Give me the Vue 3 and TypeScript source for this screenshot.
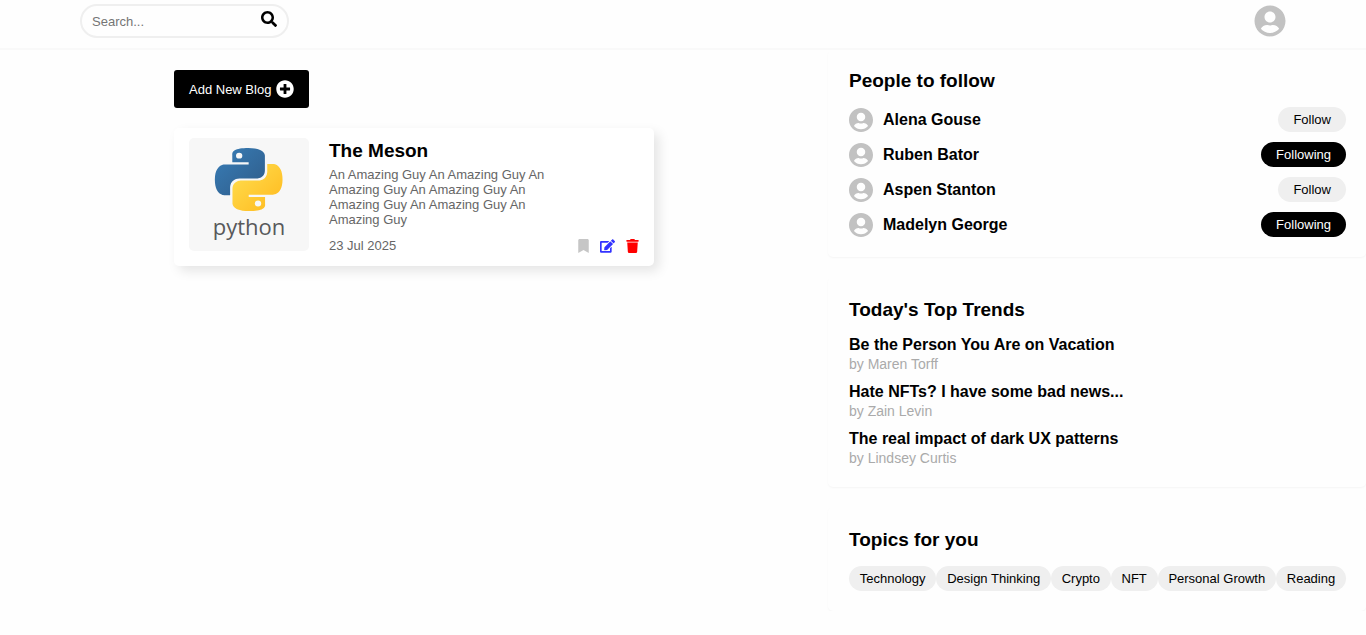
<script setup lang="ts">
import { ref } from 'vue'

interface Person { name: string; following: boolean }
interface Trend { title: string; author: string }

const search = ref('')
const people = ref<Person[]>([
  { name: 'Alena Gouse', following: false },
  { name: 'Ruben Bator', following: true },
  { name: 'Aspen Stanton', following: false },
  { name: 'Madelyn George', following: true },
])
const trends: Trend[] = [
  { title: 'Be the Person You Are on Vacation', author: 'Maren Torff' },
  { title: 'Hate NFTs? I have some bad news...', author: 'Zain Levin' },
  { title: 'The real impact of dark UX patterns', author: 'Lindsey Curtis' },
]
const topics: string[] = ['Technology', 'Design Thinking', 'Crypto', 'NFT', 'Personal Growth', 'Reading']

const userIcon =
  'M248 8C111 8 0 119 0 256s111 248 248 248 248-111 248-248S385 8 248 8zm0 96c48.6 0 88 39.4 88 88s-39.4 88-88 88-88-39.4-88-88 39.4-88 88-88zm0 344c-58.7 0-111.3-26.6-146.5-68.2 18.8-35.4 55.6-59.8 98.5-59.8 2.4 0 4.8.4 7.1 1.1 13 4.2 26.6 6.9 40.9 6.9 14.3 0 28-2.7 40.9-6.9 2.3-.7 4.7-1.1 7.1-1.1 42.9 0 79.7 24.4 98.5 59.8C359.3 421.4 306.7 448 248 448z'
</script>

<template>
  <div class="page">
    <header class="topbar">
      <form class="search" role="search" @submit.prevent>
        <input v-model="search" type="text" placeholder="Search..." aria-label="Search" />
        <button class="icon-button" type="submit" aria-label="Search">
          <svg width="16" height="16" viewBox="0 0 512 512"><path d="M505 442.7L405.3 343c-4.500-4.500-10.600-7-17-7H372c27.600-35.300 44-79.700 44-128C416 93.100 322.900 0 208 0S0 93.100 0 208s93.100 208 208 208c48.300 0 92.700-16.400 128-44v16.300c0 6.400 2.500 12.500 7 17l99.700 99.700c9.400 9.400 24.600 9.400 33.900 0l28.300-28.300c9.400-9.400 9.400-24.600.1-34zM208 336c-70.700 0-128-57.200-128-128 0-70.700 57.200-128 128-128 70.700 0 128 57.200 128 128 0 70.700-57.200 128-128 128z" /></svg>
        </button>
      </form>
      <button class="icon-button profile" type="button" aria-label="Profile">
        <svg width="32" height="32" viewBox="-8 0 512 512"><path :d="userIcon" /></svg>
      </button>
    </header>

    <div class="content">
      <main class="feed">
        <button class="add" type="button">
          Add New Blog
          <svg width="18" height="18" viewBox="0 0 512 512"><path d="M256 8C119 8 8 119 8 256s111 248 248 248 248-111 248-248S393 8 256 8zm144 276c0 6.600-5.400 12-12 12h-92v92c0 6.600-5.400 12-12 12h-56c-6.600 0-12-5.400-12-12v-92h-92c-6.600 0-12-5.400-12-12v-56c0-6.600 5.400-12 12-12h92v-92c0-6.600 5.400-12 12-12h56c6.600 0 12 5.400 12 12v92h92c6.600 0 12 5.400 12 12v56z" /></svg>
        </button>

        <article class="blog">
          <svg class="thumb" width="120" height="113" viewBox="0 0 120 113" role="img" aria-label="python">
            <defs>
              <linearGradient id="py-blue" x1="0" y1="0" x2="1" y2="1"><stop offset="0" stop-color="#387eb8" /><stop offset="1" stop-color="#2f5b88" /></linearGradient>
              <linearGradient id="py-yellow" x1="0" y1="0" x2="1" y2="1"><stop offset="0" stop-color="#ffe052" /><stop offset="1" stop-color="#ffb81c" /></linearGradient>
            </defs>
            <rect width="120" height="113" fill="#f7f7f7" />
            <g transform="translate(26 10) scale(2.8 2.63)">
              <path fill="url(#py-blue)" d="M14.25.18l.9.2.73.26.59.3.45.32.34.34.25.34.16.33.1.3.04.26.02.2-.01.13V8.5l-.05.63-.13.55-.21.46-.26.38-.3.31-.33.25-.35.19-.35.14-.33.1-.3.07-.26.04-.21.02H8.77l-.69.05-.59.14-.5.22-.41.27-.33.32-.27.35-.2.36-.15.37-.1.35-.07.32-.04.27-.02.21v3.060H3.170l-.21-.03-.28-.07-.32-.12-.35-.18-.36-.26-.36-.36-.35-.46-.32-.59-.28-.73-.21-.88-.14-1.050-.05-1.230.06-1.220.16-1.040.24-.87.32-.71.36-.57.4-.44.42-.33.42-.24.4-.16.36-.1.32-.05.24-.01h.16l.06.01h8.160v-.83H6.180l-.01-2.750-.02-.37.05-.34.11-.31.17-.28.25-.26.31-.23.38-.2.44-.18.51-.15.58-.12.64-.1.71-.06.77-.04.84-.02 1.270.05z" />
              <circle cx="8.630" cy="2.900" r="1.130" fill="#f7f7f7" />
              <path fill="url(#py-yellow)" d="M21.1 6.110l.28.06.32.12.35.18.36.27.36.35.35.47.32.59.28.73.21.88.14 1.040.05 1.230-.06 1.230-.16 1.040-.24.86-.32.71-.36.57-.4.45-.42.33-.42.24-.4.16-.36.09-.32.05-.24.02-.16-.01h-8.220v.82h5.840l.01 2.760.02.36-.05.34-.11.31-.17.29-.25.25-.31.24-.38.2-.44.17-.51.15-.58.13-.64.09-.71.07-.77.04-.84.01-1.270-.04-1.070-.14-.9-.2-.73-.25-.59-.3-.45-.33-.34-.34-.25-.34-.16-.33-.1-.3-.04-.25-.02-.2.01-.13v-5.340l.05-.64.13-.54.21-.46.26-.38.3-.32.33-.24.35-.2.35-.14.33-.1.3-.06.26-.04.21-.02.13-.01h5.840l.69-.05.59-.14.5-.21.41-.28.33-.32.27-.35.2-.36.15-.36.1-.35.07-.32.04-.28.02-.21V6.070h2.090l.14.01z" />
              <circle cx="15.370" cy="21.100" r="1.130" fill="#f7f7f7" />
            </g>
            <text x="60" y="97" text-anchor="middle" class="wordmark">python</text>
          </svg>
          <div class="blog-body">
            <h2>The Meson</h2>
            <p>An Amazing Guy An Amazing Guy An Amazing Guy An Amazing Guy An Amazing Guy An Amazing Guy An Amazing Guy</p>
            <footer>
              <time datetime="2025-07-23">23 Jul 2025</time>
              <div class="actions">
                <button class="icon-button save" type="button" aria-label="Bookmark">
                  <svg width="11" height="14" viewBox="0 0 384 512"><path d="M0 512V48C0 21.490 21.490 0 48 0h288c26.510 0 48 21.490 48 48v464L192 400 0 512z" /></svg>
                </button>
                <button class="icon-button edit" type="button" aria-label="Edit">
                  <svg width="15" height="14" viewBox="0 0 576 512"><path d="M402.600 83.200l90.200 90.200c3.800 3.800 3.800 10 0 13.800L274.400 405.600l-92.800 10.300c-12.400 1.400-22.900-9.100-21.500-21.500l10.300-92.800L388.800 83.200c3.800-3.800 10-3.800 13.800 0zm162-22.900l-48.800-48.800c-15.200-15.200-39.900-15.200-55.200 0l-35.400 35.400c-3.800 3.800-3.800 10 0 13.800l90.200 90.200c3.800 3.800 10 3.800 13.800 0l35.400-35.400c15.200-15.300 15.200-40 0-55.200zM384 346.200V448H64V128h229.800c3.200 0 6.200-1.300 8.500-3.500l40-40c7.600-7.600 2.200-20.500-8.500-20.500H48C21.500 64 0 85.500 0 112v352c0 26.500 21.500 48 48 48h352c26.500 0 48-21.500 48-48V306.200c0-10.700-12.900-16-20.500-8.500l-40 40c-2.200 2.300-3.500 5.300-3.500 8.500z" /></svg>
                </button>
                <button class="icon-button delete" type="button" aria-label="Delete">
                  <svg width="13" height="14" viewBox="0 0 448 512"><path d="M432 32H312l-9.400-18.700A24 24 0 0 0 281.100 0H166.800a23.720 23.720 0 0 0-21.400 13.300L136 32H16A16 16 0 0 0 0 48v32a16 16 0 0 0 16 16h416a16 16 0 0 0 16-16V48a16 16 0 0 0-16-16zM53.200 467a48 48 0 0 0 47.900 45h245.800a48 48 0 0 0 47.900-45L416 128H32z" /></svg>
                </button>
              </div>
            </footer>
          </div>
        </article>
      </main>

      <aside class="sidebar">
        <section class="panel">
          <h2>People to follow</h2>
          <ul class="people">
            <li v-for="person in people" :key="person.name">
              <svg class="avatar" width="24" height="24" viewBox="0 8 496 496" aria-hidden="true"><path :d="userIcon" /></svg>
              <h3>{{ person.name }}</h3>
              <button
                class="follow"
                :class="{ active: person.following }"
                type="button"
                @click="person.following = !person.following"
              >{{ person.following ? 'Following' : 'Follow' }}</button>
            </li>
          </ul>
        </section>

        <section class="panel">
          <h2>Today's Top Trends</h2>
          <ul class="trends">
            <li v-for="trend in trends" :key="trend.title">
              <h3>{{ trend.title }}</h3>
              <p>by {{ trend.author }}</p>
            </li>
          </ul>
        </section>

        <section class="panel">
          <h2>Topics for you</h2>
          <div class="topics">
            <button v-for="topic in topics" :key="topic" type="button">{{ topic }}</button>
          </div>
        </section>
      </aside>
    </div>
  </div>
</template>

<style>
body {
  margin: 0;
  background: #fefefe;
}
</style>

<style scoped>
.page,
button,
input {
  font-family: "Liberation Sans", Arial, sans-serif;
}
h2, h3, p, ul {
  margin: 0;
  padding: 0;
}
ul {
  list-style: none;
}
svg {
  display: block;
  fill: currentColor;
}
button {
  border: 0;
  cursor: pointer;
  font-size: 13px;
}
.icon-button {
  padding: 0;
  background: none;
  color: #000;
}
.topbar {
  display: flex;
  align-items: flex-start;
  justify-content: space-between;
  height: 44px;
  padding: 4px 80px 0;
  border-bottom: 2px solid #f9f9f9;
}
.search {
  display: flex;
  align-items: flex-start;
  box-sizing: border-box;
  width: 209px;
  height: 34px;
  padding: 0 10px;
  border: 2px solid #efefef;
  border-radius: 17px;
}
.search input {
  flex: 1;
  min-width: 0;
  height: 30px;
  padding: 0;
  border: 0;
  outline: 0;
  background: none;
  font-size: 13px;
}
.search input::placeholder {
  color: #757575;
}
.search .icon-button {
  padding-top: 5px;
}
.profile,
.avatar {
  color: #c2c2c2;
}
.profile {
  padding-top: 1px;
}
.content {
  display: grid;
  grid-template-columns: minmax(0, 1fr) minmax(538px, 39%);
}
.feed {
  width: 480px;
  margin: 0 auto;
  padding-top: 20px;
}
.add {
  display: flex;
  align-items: center;
  gap: 5px;
  height: 38px;
  padding: 0 15px;
  border-radius: 3px;
  background: #000;
  color: #fff;
}
.blog {
  display: flex;
  align-items: flex-start;
  gap: 20px;
  margin-top: 20px;
  padding: 10px 15px 12px;
  border-radius: 5px;
  background: #fff;
  box-shadow: 5px 5px 12px rgba(0, 0, 0, 0.1);
}
.thumb {
  flex: none;
  border-radius: 5px;
}
.wordmark {
  font-family: "Open Sans", "Noto Sans", sans-serif;
  font-size: 22px;
  fill: #58595b;
}
.blog-body {
  flex: 1;
}
.blog h2,
.panel h2 {
  font-size: 19px;
  line-height: 26px;
}
.blog p {
  width: 220px;
  margin-top: 3px;
  color: #666;
  font-size: 13px;
  line-height: 15px;
}
.blog footer {
  display: flex;
  align-items: center;
  justify-content: space-between;
  margin-top: 11px;
  color: #666;
  font-size: 13px;
  line-height: 16px;
}
.actions {
  display: flex;
  gap: 11px;
}
.save {
  color: #c6c6c6;
}
.edit {
  color: #3333ff;
}
.delete {
  color: #f00;
}
.sidebar {
  display: flex;
  flex-direction: column;
  gap: 20px;
}
.panel {
  padding: 20px 20px 20px 21px;
  border-radius: 5px;
  box-shadow: 0 1px 2px rgba(0, 0, 0, 0.04);
}
.panel:first-child {
  padding-top: 18px;
}
.panel h2 {
  margin-bottom: 13px;
}
.people {
  display: grid;
  gap: 10px;
}
.people li {
  display: flex;
  align-items: center;
  height: 25px;
}
.panel h3 {
  font-size: 16px;
  line-height: 18px;
}
.people h3 {
  flex: 1;
  margin-left: 10px;
}
.follow,
.topics button {
  height: 25px;
  padding: 0 15px;
  border-radius: 13px;
  background: #efefef;
  color: #000;
}
.follow.active {
  background: #000;
  color: #fff;
}
.trends {
  display: grid;
  gap: 10px;
}
.trends p {
  margin-top: 2px;
  color: #aaa;
  font-size: 14px;
  line-height: 17px;
}
.topics {
  display: flex;
}
.topics button {
  flex: 1 0 auto;
  padding: 0 10px;
  white-space: nowrap;
}
</style>
